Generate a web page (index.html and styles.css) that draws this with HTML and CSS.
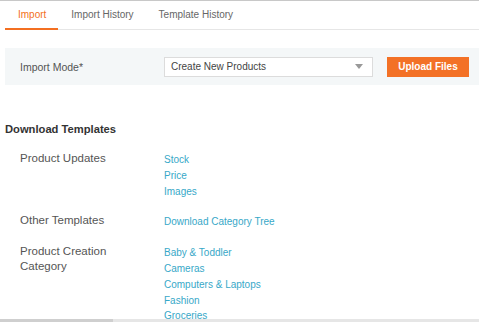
FILE: index.html
```html
<!DOCTYPE html>
<html lang="en">
<head>
  <meta charset="UTF-8" />
  <title>Import</title>
  <link rel="stylesheet" href="styles.css">
</head>
<body>

  <div class="page">
    <div class="tabs">
      <a class="tab active">Import</a>
      <a class="tab">Import History</a>
      <a class="tab">Template History</a>
    </div>

    <div class="mode-panel">
      <label class="mode-label">Import Mode*</label>
      <div class="select">
        <span>Create New Products</span>
        <span class="caret"></span>
      </div>
      <button class="btn-upload">Upload Files</button>
    </div>

    <h3 class="section-title">Download Templates</h3>

    <div class="tpl-row">
      <div class="tpl-label">Product Updates</div>
      <ul class="tpl-links">
        <li><a href="#">Stock</a></li>
        <li><a href="#">Price</a></li>
        <li><a href="#">Images</a></li>
      </ul>
    </div>

    <div class="tpl-row">
      <div class="tpl-label">Other Templates</div>
      <ul class="tpl-links">
        <li><a href="#">Download Category Tree</a></li>
      </ul>
    </div>

    <div class="tpl-row">
      <div class="tpl-label">Product Creation<br>Category</div>
      <ul class="tpl-links">
        <li><a href="#">Baby &amp; Toddler</a></li>
        <li><a href="#">Cameras</a></li>
        <li><a href="#">Computers &amp; Laptops</a></li>
        <li><a href="#">Fashion</a></li>
        <li><a href="#">Groceries</a></li>
      </ul>
    </div>
  </div>

  <!-- horizontal scrollbar at the bottom -->
  <div class="hscroll"><div class="hscroll-thumb"></div></div>

</body>
</html>
```

FILE: styles.css
```css
* {
  margin: 0;
  padding: 0;
  box-sizing: border-box;
}

html, body {
  height: 100%;
  overflow: hidden;
  background: #fff;
  font-family: "Liberation Sans", Arial, sans-serif;
}

body {
  border-top: 1px solid #c8c8c8;
}

.page {
  padding-left: 5px;
}

/* tabs */
.tabs {
  display: flex;
  height: 29px;
  border-bottom: 1px solid #e6e6e6;
}

.tab {
  padding: 0 12px 0 13px;
  font-size: 10px;
  line-height: 27px;
  color: #666;
  cursor: pointer;
}

.tab.active {
  color: #f36f21;
  border-bottom: 2px solid #f36f21;
  margin-bottom: -1px;
}

/* import mode */
.mode-panel {
  display: flex;
  align-items: center;
  margin-top: 18px;
  height: 37px;
  padding-left: 15px;
  background: #f4f7f8;
}

.mode-label {
  width: 144px;
  font-size: 10.5px;
  color: #555;
}

.select {
  display: flex;
  align-items: center;
  justify-content: space-between;
  width: 209px;
  height: 20px;
  padding: 0 9px 0 6px;
  background: #fff;
  border: 1px solid #dcdcdc;
  font-size: 10px;
  color: #444;
}

.caret {
  width: 0;
  height: 0;
  border-left: 4.5px solid transparent;
  border-right: 4.5px solid transparent;
  border-top: 5px solid #999;
}

.btn-upload {
  margin-left: 14px;
  width: 82px;
  height: 20px;
  border: none;
  background: #f37126;
  color: #fff;
  font-family: inherit;
  font-size: 10px;
  font-weight: bold;
  cursor: pointer;
}

/* templates */
.section-title {
  margin-top: 36px;
  margin-bottom: 14px;
  font-size: 11.2px;
  line-height: 16px;
  color: #333;
}

.tpl-row {
  display: flex;
  padding-left: 15px;
  margin-bottom: 14px;
}

.tpl-label {
  width: 144px;
  font-size: 11.5px;
  line-height: 15px;
  color: #555;
}

.tpl-links {
  list-style: none;
  font-size: 10px;
  line-height: 15.8px;
  padding-top: 1px;
}

.tpl-links a {
  color: #37a8c8;
  text-decoration: none;
}

/* fake scrollbar */
.hscroll {
  position: fixed;
  left: 0;
  right: 0;
  bottom: 0;
  height: 3px;
  background: #e6e6e6;
}

.hscroll-thumb {
  width: 113px;
  height: 3px;
  background: #cfcfcf;
}
```
